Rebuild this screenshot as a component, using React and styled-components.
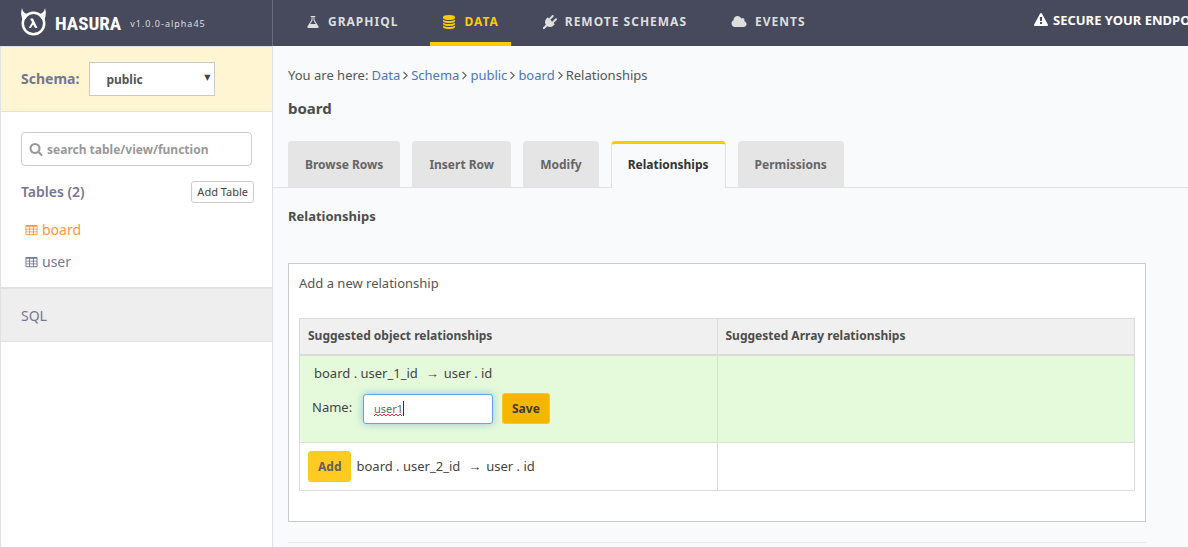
import React, { useState } from "react";
import styled, { createGlobalStyle } from "styled-components";

const GlobalStyle = createGlobalStyle`
  *, *::before, *::after { box-sizing: border-box; }
  html, body, #root { height: 100%; }
  body {
    margin: 0;
    background: #f8fafb;
    color: #555;
    font-family: "Noto Sans", "Open Sans", sans-serif;
    font-size: 13px;
    line-height: 20px;
    overflow: hidden;
  }
  button, input, select { font-family: inherit; }
  h1, h2, p { margin: 0; }
  a { text-decoration: none; }
`;

const Page = styled.div`
  display: flex;
  flex-direction: column;
  min-height: 100vh;
`;

const Header = styled.header`
  display: flex;
  height: 46px;
  background: #474a5c;
  white-space: nowrap;
  overflow: hidden;
`;

const Brand = styled.a`
  display: flex;
  align-items: center;
  flex: 0 0 273px;
  padding-left: 20px;
  border-right: 1px solid #6b6d7f;
  color: #fff;
`;

const Wordmark = styled.span`
  margin-left: 8px;
  padding-top: 2px;
  font-family: "Liberation Sans Narrow", "Roboto Condensed", "Liberation Sans", sans-serif;
  font-size: 19px;
  font-weight: 700;
`;

const Version = styled.span`
  margin-left: 9px;
  padding-top: 1px;
  color: #ddd;
  font-size: 9px;
  letter-spacing: 1px;
`;

const MainNav = styled.nav`
  display: flex;
  flex: 1;
  gap: 20px;
  padding-left: 21px;
`;

const NavLink = styled.a`
  display: flex;
  align-items: center;
  gap: 8px;
  padding: 2px 12px 0;
  border-bottom: 4px solid ${(p) => (p.$active ? "#ffca00" : "transparent")};
  color: ${(p) => (p.$active ? "#ffca00" : "#dedede")};
  font-size: 12px;
  font-weight: 700;
  letter-spacing: 1px;
`;

const SecureLink = styled.a`
  display: flex;
  align-items: center;
  gap: 5px;
  flex: 0 0 154px;
  min-width: 0;
  padding-bottom: 6px;
  color: #fff;
  font-size: 13px;
  font-weight: 700;
`;

const Body = styled.div`
  display: flex;
  flex: 1;
`;

const Sidebar = styled.aside`
  flex: 0 0 273px;
  background: #fff;
  border: 1px solid #e0e1e5;
  border-width: 0 1px;
`;

const SchemaBar = styled.div`
  display: flex;
  align-items: center;
  gap: 10px;
  padding: 15px 20px;
  border: 1px solid #e0e1e5;
  border-width: 1px 0;
  background: #fff5d2;
`;

const SidebarLabel = styled.label`
  color: #767693;
  font-size: 14px;
  font-weight: 700;
`;

const SelectWrap = styled.div`
  position: relative;
  width: 126px;
  &::after {
    content: "▼";
    position: absolute;
    right: 5px;
    top: 6px;
    color: #444;
    font-family: "DejaVu Sans", sans-serif;
    font-size: 8px;
    pointer-events: none;
  }
`;

const Select = styled.select`
  appearance: none;
  display: block;
  width: 100%;
  height: 34px;
  padding: 0 16px;
  border: 1px solid #c8c9ca;
  border-radius: 0;
  background: #fff;
  color: #555;
  font-size: 12px;
  font-weight: 700;
`;

const TablesArea = styled.div`
  padding: 20px 18px 9px 20px;
`;

const SearchBox = styled.div`
  display: flex;
  align-items: center;
  gap: 4px;
  height: 34px;
  margin-right: 2px;
  padding: 0 7px;
  border: 1px solid #ccc;
  border-radius: 4px;
  color: #999;
`;

const SearchInput = styled.input`
  flex: 1;
  min-width: 0;
  padding: 0;
  border: 0;
  outline: 0;
  background: none;
  font-size: 12px;
  font-weight: 700;
  &::placeholder { color: #999; opacity: 1; }
`;

const TablesHead = styled.div`
  display: flex;
  align-items: center;
  justify-content: space-between;
  margin-top: 15px;
`;

const TablesTitle = styled.h2`
  color: #767693;
  font-size: 14px;
  font-weight: 600;
`;

const AddTable = styled.button`
  height: 22px;
  padding: 0 5px;
  border: 1px solid #ccc;
  border-radius: 3px;
  background: #fff;
  color: #444;
  font-size: 11px;
  line-height: 20px;
`;

const TableList = styled.ul`
  margin: 11px 0 0;
  padding: 0 0 0 4px;
  list-style: none;
`;

const TableLink = styled.a`
  display: flex;
  align-items: center;
  gap: 4px;
  height: 32px;
  color: ${(p) => (p.$active ? "#fd9540" : "#767693")};
  font-size: 14px;
`;

const SqlLink = styled.a`
  display: block;
  padding: 17px 20px 15px;
  border-top: 2px solid #e2e2e4;
  border-bottom: 1px solid #e2e2e4;
  background: #eee;
  color: #767693;
  font-size: 14px;
`;

const Content = styled.main`
  flex: 1;
  min-width: 0;
`;

const PageHead = styled.div`
  padding: 19px 15px 0;
`;

const Crumbs = styled.nav`
  display: flex;
  align-items: center;
  gap: 3px;
  a { color: #4a78bd; }
`;

const Title = styled.h1`
  margin-top: 12px;
  font-size: 15px;
  line-height: 22px;
  font-weight: 700;
  color: #4d4d4d;
`;

const Tabs = styled.div`
  display: flex;
  gap: 12px;
  margin-top: 22px;
  padding: 0 15px;
  border-bottom: 1px solid #e0e1e3;
`;

const Tab = styled.a`
  height: ${(p) => (p.$active ? "47px" : "46px")};
  margin-bottom: ${(p) => (p.$active ? "-1px" : "0")};
  padding: ${(p) => (p.$active ? "11px 16px 0" : "14px 17px 0")};
  border: solid #e0e1e3;
  border-width: ${(p) => (p.$active ? "3px 1px 0" : "0")};
  border-top-color: #ffca00;
  border-radius: 4px 4px 0 0;
  background: ${(p) => (p.$active ? "#f8fafb" : "#e5e5e5")};
  color: ${(p) => (p.$active ? "#333" : "#666")};
  font-size: 12px;
  font-weight: 700;
`;

const Section = styled.section`
  padding: 18px 42px 0 15px;
`;

const SectionTitle = styled.h2`
  color: #4d4d4d;
  font-size: 13px;
  font-weight: 700;
`;

const Panel = styled.div`
  margin-top: 37px;
  padding: 9px 10px 30px;
  border: 1px solid #c9cbcd;
  background: #fff;
`;

const Divider = styled.hr`
  margin: 20px 0 0;
  border: 0;
  border-top: 1px solid #e8eaec;
`;

const Table = styled.table`
  width: 100%;
  margin-top: 25px;
  border-collapse: collapse;
  table-layout: fixed;
`;

const HeadCell = styled.th`
  height: 36px;
  padding: 0 8px;
  border: 1px solid #dadbdd;
  border-bottom-width: 2px;
  background: #f0f0f0;
  color: #4d4d4d;
  font-size: 12px;
  font-weight: 700;
  text-align: left;
`;

const Cell = styled.td`
  padding: 7px 8px 8px;
  height: ${(p) => (p.$editing ? "88px" : "48px")};
  border: 1px solid #dadbdd;
  background: ${(p) => (p.$editing ? "#e5fada" : "#fff")};
  color: #444;
  vertical-align: ${(p) => (p.$editing ? "top" : "middle")};
`;

const Relation = styled.div`
  display: flex;
  align-items: center;
  gap: 5px;
  padding-left: ${(p) => (p.$inset ? "6px" : "0")};
`;

const Arrow = styled.span`
  margin-left: 3px;
`;

const NameForm = styled.form`
  display: flex;
  align-items: center;
  margin-top: 10px;
  padding-left: 4px;
`;

const NameLabel = styled.label`
  flex: 0 0 51px;
  padding-bottom: 3px;
`;

const NameField = styled.span`
  position: relative;
  align-self: flex-end;
  margin-right: 9px;
`;

const NameInput = styled.input`
  display: block;
  width: 130px;
  height: 30px;
  padding: 0 10px;
  border: 1px solid #66a0e8;
  border-radius: 3px;
  outline: 0;
  background: #fff;
  box-shadow: 0 0 8px rgba(102, 160, 232, 0.6);
  caret-color: transparent;
  color: #666;
  font-size: 11px;
`;

const Squiggle = styled.svg`
  position: absolute;
  left: 11px;
  top: 19px;
  fill: none;
  stroke: #f33;
  pointer-events: none;
`;

const Caret = styled.span`
  position: absolute;
  left: 40px;
  top: 7px;
  width: 1px;
  height: 15px;
  background: #333;
`;

const YellowButton = styled.button`
  height: 31px;
  padding: 0 9px;
  border: 1px solid #ffc817;
  border-radius: 3px;
  background: ${(p) => (p.$pressed ? "#f3b700" : "#ffcb22")};
  color: ${(p) => (p.$pressed ? "#3c3c3c" : "#606060")};
  font-size: 12px;
  font-weight: 700;
`;

const Glyph = styled.svg`
  flex: none;
  display: block;
  fill: currentColor;
`;

const cells = [192, 704, 1216]
  .flatMap((x) => [416, 800, 1184].map((y) => `M${x + 384} ${y + 192}v-192q0-14-9-23t-23-9h-320q-14 0-23 9t-9 23v192q0 14 9 23t23 9h320q14 0 23-9t9-23z`))
  .join("");

const icons = {
  angle: [640, "M611 960q0 13-10 23l-466 466q-10 10-23 10t-23-10l-50-50q-10-10-10-23t10-23l393-393-393-393q-10-10-10-23t10-23l50-50q10-10 23-10t23 10l466 466q10 10 10 23z"],
  flask: [1792, "M1591 1448q56 89 21.5 152.5t-140.5 63.5h-1152q-106 0-140.5-63.5t21.5-152.5l503-793v-399h-64q-26 0-45-19t-19-45 19-45 45-19h512q26 0 45 19t19 45-19 45-45 19h-64v399zm-779-725l-272 429h712l-272-429-20-31v-436h-128v436z"],
  database: [1792, "M896 768q237 0 443-43t325-127v170q0 69-103 128t-280 93.5-385 34.5-385-34.5-280-93.5-103-128v-170q119 84 325 127t443 43zm0 768q237 0 443-43t325-127v170q0 69-103 128t-280 93.5-385 34.5-385-34.5-280-93.5-103-128v-170q119 84 325 127t443 43zm0-384q237 0 443-43t325-127v170q0 69-103 128t-280 93.5-385 34.5-385-34.5-280-93.5-103-128v-170q119 84 325 127t443 43zm0-1152q208 0 385 34.5t280 93.5 103 128v128q0 69-103 128t-280 93.5-385 34.5-385-34.5-280-93.5-103-128v-128q0-69 103-128t280-93.5 385-34.5z"],
  plug: [1792, "M1755 453q37 38 37 90.5t-37 90.5l-401 400 150 150-160 160q-163 163-389.5 186.5t-411.5-100.5l-362 362h-181v-181l362-362q-124-185-100.5-411.5t186.5-389.5l160-160 150 150 400-401q38-37 91-37t90 37 37 90.5-37 90.5l-400 401 234 234 401-400q38-37 91-37t90 37z"],
  cloud: [2048, "M1984 1152q0 159-112.5 271.5t-271.5 112.5h-1088q-185 0-316.5-131.5t-131.5-316.5q0-132 71-241.5t187-163.5q-2-28-2-43 0-212 150-362t362-150q158 0 286.5 88t187.5 230q70-62 166-62 106 0 181 75t75 181q0 75-41 138 129 30 213 134.5t84 239.5z"],
  warning: [1792, "M1024 1375v-190q0-14-9.5-23.5t-22.5-9.5h-192q-13 0-22.5 9.5t-9.5 23.5v190q0 14 9.5 23.5t22.5 9.5h192q13 0 22.5-9.5t9.5-23.5zm-2-374l18-459q0-12-10-19-13-11-24-11h-220q-11 0-24 11-10 7-10 21l17 457q0 10 10 16.5t24 6.5h185q14 0 23.5-6.5t10.5-16.5zm-14-934l768 1408q35 63-2 126-17 29-46.5 46t-63.5 17h-1536q-34 0-63.5-17t-46.5-46q-37-63-2-126l768-1408q17-31 47-49t65-18 65 18 47 49z"],
  search: [1792, "M1216 832q0-185-131.5-316.5t-316.5-131.5-316.5 131.5-131.5 316.5 131.5 316.5 316.5 131.5 316.5-131.5 131.5-316.5zm512 832q0 52-38 90t-90 38q-54 0-90-38l-343-342q-179 124-399 124-143 0-273.5-55.5t-225-150-150-225-55.5-273.5 55.5-273.5 150-225 225-150 273.5-55.5 273.5 55.5 225 150 150 225 55.5 273.5q0 220-124 399l343 343q37 37 37 90z"],
  table: [1792, `${cells}M1728 288v1088q0 66-47 113t-113 47h-1344q-66 0-113-47t-47-113v-1088q0-66 47-113t113-47h1344q66 0 113 47t47 113z`],
};

function Icon({ name, size = 14 }) {
  const [width, d] = icons[name];
  return (
    <Glyph width={name === "angle" ? 5 : size} height={size} viewBox={`0 0 ${width} 1792`} aria-hidden="true">
      <path d={d} fillRule={name === "table" ? "evenodd" : "nonzero"} />
    </Glyph>
  );
}

function Logo() {
  return (
    <Glyph width="27" height="30" viewBox="0 0 27 30" aria-hidden="true">
      <circle cx="13.5" cy="15.500" r="10.700" fill="none" stroke="currentColor" strokeWidth="2.500" />
      <path d="M2 0C.7 4 .9 8 2.600 11.500L3.500 13L9 6.500C5 6 2.800 4 2 0ZM25 0C26.300 4 26.100 8 24.400 11.500L23.500 13L18 6.500C22 6 24.200 4 25 0Z" />
      <path d="M10.500 10.500H13L17.500 20H15.200L13 16.500L10.800 20H8.800L12 14.500L11.200 12.300H10.500Z" />
    </Glyph>
  );
}

const navItems = [
  { label: "GRAPHIQL", icon: "flask" },
  { label: "DATA", icon: "database" },
  { label: "REMOTE SCHEMAS", icon: "plug" },
  { label: "EVENTS", icon: "cloud", size: 16 },
];
const tabs = ["Browse Rows", "Insert Row", "Modify", "Relationships", "Permissions"];

export default function App() {
  const [name, setName] = useState("user1");
  return (
    <Page>
      <GlobalStyle />
      <Header>
        <Brand href="#home">
          <Logo />
          <Wordmark>HASURA</Wordmark>
          <Version>v1.0.0-alpha45</Version>
        </Brand>
        <MainNav>
          {navItems.map((item) => (
            <NavLink key={item.label} href={`#${item.icon}`} $active={item.label === "DATA"}>
              <Icon name={item.icon} size={item.size} />
              {item.label}
            </NavLink>
          ))}
        </MainNav>
        <SecureLink href="#secure">
          <Icon name="warning" />
          SECURE YOUR ENDPOINT
        </SecureLink>
      </Header>
      <Body>
        <Sidebar>
          <SchemaBar>
            <SidebarLabel htmlFor="schema">Schema:</SidebarLabel>
            <SelectWrap>
              <Select id="schema" defaultValue="public">
                <option>public</option>
              </Select>
            </SelectWrap>
          </SchemaBar>
          <TablesArea>
            <SearchBox>
              <Icon name="search" />
              <SearchInput aria-label="Search tables" placeholder="search table/view/function" />
            </SearchBox>
            <TablesHead>
              <TablesTitle>Tables (2)</TablesTitle>
              <AddTable type="button">Add Table</AddTable>
            </TablesHead>
            <TableList>
              {["board", "user"].map((t) => (
                <li key={t}>
                  <TableLink href={`#${t}`} $active={t === "board"}>
                    <Icon name="table" size={13} />
                    {t}
                  </TableLink>
                </li>
              ))}
            </TableList>
          </TablesArea>
          <SqlLink href="#sql">SQL</SqlLink>
        </Sidebar>
        <Content>
          <PageHead>
            <Crumbs aria-label="Breadcrumb">
              <span>You are here:</span>
              {["Data", "Schema", "public", "board"].map((c) => (
                <React.Fragment key={c}>
                  <a href={`#${c}`}>{c}</a>
                  <Icon name="angle" />
                </React.Fragment>
              ))}
              <span>Relationships</span>
            </Crumbs>
            <Title>board</Title>
          </PageHead>
          <Tabs>
            {tabs.map((t) => (
              <Tab key={t} href={`#${t}`} $active={t === "Relationships"}>
                {t}
              </Tab>
            ))}
          </Tabs>
          <Section>
            <SectionTitle>Relationships</SectionTitle>
            <Panel>
              <p>Add a new relationship</p>
              <Table>
                <thead>
                  <tr>
                    <HeadCell>Suggested object relationships</HeadCell>
                    <HeadCell>Suggested Array relationships</HeadCell>
                  </tr>
                </thead>
                <tbody>
                  <tr>
                    <Cell $editing>
                      <Relation $inset>
                        <span>board . user_1_id</span>
                        <Arrow>→</Arrow>
                        <span>user . id</span>
                      </Relation>
                      <NameForm onSubmit={(e) => e.preventDefault()}>
                        <NameLabel htmlFor="rel-name">Name:</NameLabel>
                        <NameField>
                          <NameInput id="rel-name" value={name} onChange={(e) => setName(e.target.value)} />
                          <Squiggle width="28" height="4" viewBox="0 0 28 4" aria-hidden="true">
                            <path d="M0 3L2 1L4 3L6 1L8 3L10 1L12 3L14 1L16 3L18 1L20 3L22 1L24 3L26 1L28 3" />
                          </Squiggle>
                          <Caret />
                        </NameField>
                        <YellowButton $pressed type="submit">Save</YellowButton>
                      </NameForm>
                    </Cell>
                    <Cell $editing />
                  </tr>
                  <tr>
                    <Cell>
                      <Relation>
                        <YellowButton type="button">Add</YellowButton>
                        <span>board . user_2_id</span>
                        <Arrow>→</Arrow>
                        <span>user . id</span>
                      </Relation>
                    </Cell>
                    <Cell />
                  </tr>
                </tbody>
              </Table>
            </Panel>
            <Divider />
          </Section>
        </Content>
      </Body>
    </Page>
  );
}
